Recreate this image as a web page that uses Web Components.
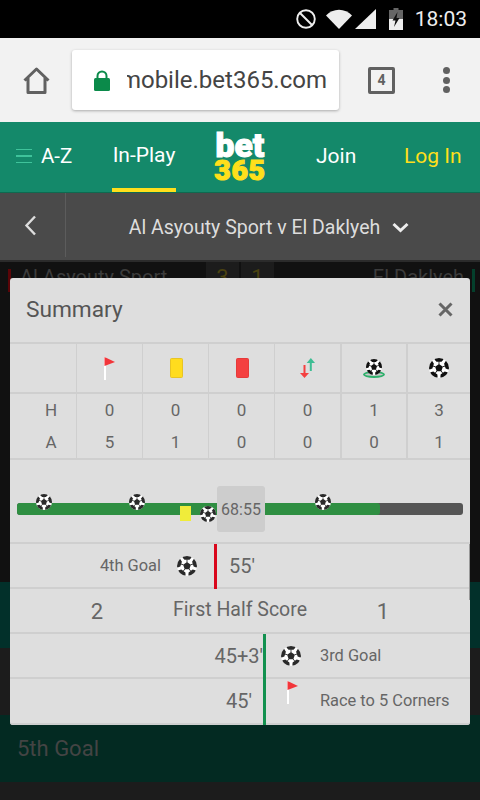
<!DOCTYPE html>
<html>
<head>
<meta charset="utf-8">
<title>Summary</title>
<style>
  html, body { margin: 0; padding: 0; background: #111; }
  body { width: 480px; height: 800px; overflow: hidden; position: relative; font-family: Roboto, "Liberation Sans", sans-serif; }
</style>
</head>
<body>
<status-bar></status-bar>
<browser-bar></browser-bar>
<site-header></site-header>
<match-bar></match-bar>
<match-behind></match-behind>
<summary-modal></summary-modal>

<script>
/* Ball icon, used in the table, the timeline and the event rows */
class SoccerBall extends HTMLElement {
    connectedCallback() {
        const size = this.getAttribute('size') || 20;
        const ink = this.getAttribute('ink') || '#222';
        let patches = '';
        for (let k = 0; k < 5; k++) {
            patches += `<g transform="rotate(${k * 72} 12 12)">
                <path d="M6.800 -1h10.400v3L15 4.600H9L6.800 2z" fill="${ink}"/>
                <path d="M12 4v3.500" stroke="${ink}" stroke-width="1" />
            </g>`;
        }
        this.shadowRoot || this.attachShadow({ mode: 'open' });
        this.shadowRoot.innerHTML = `
            <style>
                :host { display: inline-flex; width: ${size}px; height: ${size}px; }
                svg { width: 100%; height: 100%; display: block; }
            </style>
            <svg viewBox="0 0 24 24">
                <defs><clipPath id="c"><circle cx="12" cy="12" r="12"/></clipPath></defs>
                <circle cx="12" cy="12" r="12" fill="#fff"/>
                <g clip-path="url(#c)">${patches}</g>
                <path d="M12 7.200l4.600 3.300-1.800 5.500H9.200l-1.800-5.500z" fill="${ink}"/>
            </svg>`;
    }
}
customElements.define('soccer-ball', SoccerBall);

class CornerFlag extends HTMLElement {
    connectedCallback() {
        this.attachShadow({ mode: 'open' }).innerHTML = `
            <style>
                :host { display: inline-flex; width: 11px; height: 23px; }
                svg { width: 100%; height: 100%; display: block; }
            </style>
            <svg viewBox="0 0 11 23">
                <rect x="0" y="0" width="2" height="23" fill="#fff"/>
                <path d="M0.500 0L11 5 0.500 9z" fill="#f2353a"/>
            </svg>`;
    }
}
customElements.define('corner-flag', CornerFlag);

class StatusBar extends HTMLElement {
    connectedCallback() {
        this.attachShadow({ mode: 'open' }).innerHTML = `
            <style>
                :host { display: flex; height: 38px; background: #000; align-items: center; justify-content: flex-end; padding-right: 13px; box-sizing: border-box; }
                svg { display: block; }
                .time { color: #eee; font: 400 21px Roboto, sans-serif; margin-left: 12px; }
            </style>
            <svg width="20" height="20" viewBox="0 0 20 20" style="margin-right:10px">
                <circle cx="10" cy="10" r="8.800" fill="none" stroke="#eee" stroke-width="1.900"/>
                <path d="M4 4l12 12" stroke="#eee" stroke-width="1.900"/>
            </svg>
            <svg width="26" height="20" viewBox="0 0 26 20" style="margin-right:3px">
                <path d="M0 6.500C3.500 3 8 0.800 13 0.800S22.500 3 26 6.500L13 20z" fill="#eee"/>
            </svg>
            <svg width="21" height="20" viewBox="0 0 21 20">
                <path d="M0 20L21 0v20z" fill="#eee"/>
            </svg>
            <svg width="14" height="22" viewBox="0 0 14 22" style="margin-left:13px">
                <path d="M4.500 0h5v2H14v20H0V2h4.500z" fill="#666"/>
                <path d="M0 11h14v11H0z" fill="#eee"/>
                <path d="M8.500 4L3.500 12.500h3L5 19l5.500-9h-3z" fill="#111"/>
            </svg>
            <span class="time">18:03</span>`;
    }
}
customElements.define('status-bar', StatusBar);

class BrowserBar extends HTMLElement {
    connectedCallback() {
        this.attachShadow({ mode: 'open' }).innerHTML = `
            <style>
                :host { display: flex; height: 84px; background: #f2f2f2; align-items: center; box-sizing: border-box; padding-left: 23px; }
                svg { display: block; }
                .url { width: 267px; height: 60px; margin-left: 22px; background: #fff; border-radius: 3px; box-shadow: 0 1px 3px rgba(0,0,0,.3); display: flex; align-items: center; box-sizing: border-box; padding-left: 22px; }
                .clip { width: 200px; margin-left: 17px; overflow: hidden; white-space: nowrap; direction: rtl; font: 400 24px Roboto, sans-serif; color: #444; }
                .clip span { direction: ltr; unicode-bidi: embed; }
                .tabs { width: 27px; height: 27px; margin-left: 29px; border: 3px solid #616161; border-radius: 2px; box-sizing: border-box; display: flex; align-items: center; justify-content: center; font: 700 14px Roboto, sans-serif; color: #616161; }
                .dots { margin-left: 48px; display: flex; flex-direction: column; gap: 2.500px; }
                .dots i { width: 7px; height: 7px; border-radius: 50%; background: #616161; display: block; }
            </style>
            <svg width="27" height="27" viewBox="0 0 27 27">
                <path d="M1.500 13.500L13.500 2l12 11.500M5 11v14.500h17V11" fill="none" stroke="#616161" stroke-width="3" stroke-linejoin="round"/>
            </svg>
            <div class="url">
                <svg width="16" height="21" viewBox="0 0 16 21">
                    <path d="M3.500 9V6a4.500 4.500 0 0 1 9 0v3" fill="none" stroke="#0b8a4a" stroke-width="2"/>
                    <rect x="0" y="8" width="16" height="13" rx="1.500" fill="#0b8a4a"/>
                </svg>
                <div class="clip"><span>mobile.bet365.com</span></div>
            </div>
            <div class="tabs">4</div>
            <div class="dots"><i></i><i></i><i></i></div>`;
    }
}
customElements.define('browser-bar', BrowserBar);

class SiteHeader extends HTMLElement {
    connectedCallback() {
        this.attachShadow({ mode: 'open' }).innerHTML = `
            <style>
                :host { display: block; height: 71px; background: #14896a; border-bottom: 1px solid #0e6a50; box-sizing: border-box; font: 400 21px Roboto, sans-serif; color: #fff; }
                nav { display: grid; grid-template-columns: 112px 64px 1fr 88px 76px; height: 100%; }
                .item { display: flex; align-items: center; height: 68px; }
                .az { padding-left: 16px; gap: 9px; font-size: 20.500px; }
                .burger { width: 16px; display: flex; flex-direction: column; gap: 5px; }
                .burger i { display: block; height: 1.500px; background: #3fc39b; }
                .active { border-bottom: 4px solid #ffdf1b; height: 66px; justify-content: center; box-sizing: content-box; }
                .logo { display: flex; flex-direction: column; align-items: center; justify-content: flex-start; line-height: 1; padding-top: 12px; margin-right: 12px; }
                .logo b { font-family: Roboto, sans-serif; font-weight: 900; display: block; -webkit-text-stroke: 1.100px currentColor; }
                .bet { font-size: 33.500px; height: 25px; line-height: 23px; letter-spacing: .1px; color: #fff; }
                .n365 { font-size: 28.500px; height: 21px; line-height: 23px; color: #ffdf1b; letter-spacing: .6px; }
                .login { color: #ffdf1b; }
            </style>
            <nav>
                <div class="item az"><div class="burger"><i></i><i></i><i></i></div><span>A-Z</span></div>
                <div class="item active">In-Play</div>
                <div class="logo"><b class="bet">bet</b><b class="n365">365</b></div>
                <div class="item join">Join</div>
                <div class="item login">Log In</div>
            </nav>`;
    }
}
customElements.define('site-header', SiteHeader);

class MatchBar extends HTMLElement {
    connectedCallback() {
        this.attachShadow({ mode: 'open' }).innerHTML = `
            <style>
                :host { display: flex; height: 69px; background: #4a4a4a; border-bottom: 2px solid #2b2b2b; box-sizing: border-box; color: #ddd; font: 400 19.500px Roboto, sans-serif; }
                .back { width: 61px; height: 64px; padding-right: 4px; border-right: 1px solid #5c5c5c; display: flex; align-items: center; justify-content: center; }
                .title { flex: 1; display: flex; align-items: center; justify-content: center; gap: 12px; height: 64px; padding: 2px 8px 0 0; }
                svg { display: block; }
            </style>
            <div class="back">
                <svg width="13" height="21" viewBox="0 0 13 21"><path d="M11 1.500L2.500 10.500l8.500 9" fill="none" stroke="#ddd" stroke-width="2.400"/></svg>
            </div>
            <div class="title">
                <span>Al Asyouty Sport v El Daklyeh</span>
                <svg width="17" height="11" viewBox="0 0 17 11"><path d="M1.500 2l7 6.500 7-6.500" fill="none" stroke="#eee" stroke-width="3"/></svg>
            </div>`;
    }
}
customElements.define('match-bar', MatchBar);

/* The dimmed page under the popup */
class MatchBehind extends HTMLElement {
    connectedCallback() {
        this.attachShadow({ mode: 'open' }).innerHTML = `
            <style>
                :host { display: block; font: 400 20px Roboto, sans-serif; color: #3c3c3c; background: #111; }
                .score { height: 320px; box-sizing: border-box; }
                .head { display: flex; height: 30px; align-items: center; }
                .mark { width: 3px; height: 23px; background: #5a0508; margin: 7px 9px 0 8px; }
                .mark.away { background: #04402c; margin: 7px 5px 0 8px; }
                .home { width: 186px; }
                .num { width: 33px; height: 30px; background: #1c1c1c; color: #4a4210; font-size: 22px; text-align: center; line-height: 32px; margin-right: 2px; }
                .away-name { flex: 1; text-align: right; }
                .band { height: 66px; background: #02302a; }
                .plain { height: 67px; background: #1c1c1c; }
                .goal { height: 67px; background: #032a22; display: flex; align-items: center; padding-left: 17px; font-size: 22px; color: #444; }
                .end { height: 18px; background: #1c1c1c; }
            </style>
            <div class="score">
                <div class="head">
                    <div class="mark"></div>
                    <div class="home">Al Asyouty Sport</div>
                    <div class="num">3</div><div class="num">1</div>
                    <div class="away-name">El Daklyeh</div>
                    <div class="mark away"></div>
                </div>
            </div>
            <div class="band"></div>
            <div class="plain"></div>
            <div class="goal">5th Goal</div>
            <div class="end"></div>`;
    }
}
customElements.define('match-behind', MatchBehind);

class StatsTable extends HTMLElement {
    connectedCallback() {
        const rows = [['H', 0, 0, 0, 0, 1, 3], ['A', 5, 1, 0, 0, 0, 1]];
        const card = c => `<div style="width:13px;height:20px;margin-left:2px;box-sizing:border-box;border-radius:1.500px;background:${c[0]};border:1px solid ${c[1]}"></div>`;
        const icons = [
            '',
            '<corner-flag></corner-flag>',
            card(['#ffdc1e', '#e8c424']),
            card(['#f44040', '#e63a3a']),
            `<svg width="15" height="20" viewBox="0 0 15 20"><path d="M6.700 5L10.850 0 15 5z" fill="#3dbd93"/><rect x="9.800" y="4" width="2" height="9" fill="#3dbd93"/><path d="M0 15h9L4.500 20z" fill="#f44040"/><rect x="3.500" y="7" width="2" height="9" fill="#f44040"/></svg>`,
            `<div class="pitch"><i></i><soccer-ball size="16" ink="#111"></soccer-ball></div>`,
            `<soccer-ball size="20" ink="#111"></soccer-ball>`
        ];
        this.attachShadow({ mode: 'open' }).innerHTML = `
            <style>
                :host { display: block; font: 400 17px Roboto, sans-serif; color: #666; }
                .row { display: grid; grid-template-columns: repeat(6, 66px) 1fr; }
                .icons { height: 48px; border-bottom: 2px solid #cfcfcf; }
                .vals { height: 32px; }
                .cell { display: flex; align-items: center; justify-content: center; border-left: 1px solid #cfcfcf; box-sizing: border-box; }
                .cell:first-child { border-left: 0; padding-left: 16px; }
                .cell:nth-child(6), .cell:nth-child(7) { border-left-width: 2px; }
                .pitch { position: relative; width: 22px; height: 24px; display: flex; justify-content: center; padding-top: 3px; box-sizing: border-box; }
                .pitch i { position: absolute; left: 0; top: 15px; width: 22px; height: 7px; border-radius: 50%; border: 2.500px solid #2fb06c; background: #c8c8c8; box-sizing: border-box; }
                .pitch soccer-ball { position: relative; }
            </style>
            <div class="row icons">${icons.map(i => `<div class="cell">${i}</div>`).join('')}</div>
            ${rows.map(r => `<div class="row vals">${r.map(v => `<div class="cell">${v}</div>`).join('')}</div>`).join('')}`;
    }
}
customElements.define('stats-table', StatsTable);

class MatchTimeline extends HTMLElement {
    connectedCallback() {
        this.attachShadow({ mode: 'open' }).innerHTML = `
            <style>
                :host { display: block; height: 82px; position: relative; }
                .track { position: absolute; left: 7px; top: 43px; width: 446px; height: 12px; border-radius: 3px; overflow: hidden; background: #555; }
                .fill { width: 363px; height: 100%; background: #2f8f42; border-radius: 0 3px 3px 0; }
                .clock { position: absolute; left: 207px; top: 26px; width: 48px; height: 46px; background: #cdcdcd; border-radius: 3px; font: 400 16px Roboto, sans-serif; color: #666; display: flex; align-items: center; justify-content: center; }
                soccer-ball { position: absolute; }
                .yellow { position: absolute; left: 170px; top: 46px; width: 11px; height: 15px; background: #f0ec3a; }
            </style>
            <div class="track"><div class="fill"></div></div>
            <soccer-ball size="16" ink="#2a2a2a" style="left:26px;top:34px"></soccer-ball>
            <soccer-ball size="16" ink="#2a2a2a" style="left:119px;top:34px"></soccer-ball>
            <soccer-ball size="16" ink="#2a2a2a" style="left:305px;top:34px"></soccer-ball>
            <div class="yellow"></div>
            <soccer-ball size="16" ink="#2a2a2a" style="left:190px;top:46px"></soccer-ball>
            <div class="clock">68:55</div>`;
    }
}
customElements.define('match-timeline', MatchTimeline);

/* One line of the event list: side="home" puts the label left of the rule, side="away" right of it */
class EventRow extends HTMLElement {
    connectedCallback() {
        const side = this.getAttribute('side');
        const time = this.getAttribute('time');
        const label = this.getAttribute('label');
        const colour = side === 'home' ? '#d9071c' : '#12914f';
        const flag = this.getAttribute('icon') === 'flag';
        const icon = flag
            ? '<corner-flag></corner-flag>'
            : '<soccer-ball size="20" ink="#2a2a2a"></soccer-ball>';
        const inner = side === 'home' ? `
            <div class="left home">
                <span class="label">${label}</span><span class="ico">${icon}</span>
            </div>
            <div class="rule"></div>
            <div class="right"><span class="time" style="margin-left:12px">${time}</span></div>` : `
            <div class="left"><span class="time" style="margin-right:${this.getAttribute('pad') || 0}px">${time}</span></div>
            <div class="rule"></div>
            <div class="right">
                <span class="ico away ${flag ? 'up' : ''}">${icon}</span><span class="label ${flag ? 'down' : ''}">${label}</span>
            </div>`;
        this.attachShadow({ mode: 'open' }).innerHTML = `
            <style>
                :host { display: block; height: ${this.getAttribute('h') || 45}px; border-bottom: 2px solid #cfcfcf; box-sizing: border-box; }
                .wrap { display: grid; grid-template-columns: ${side === 'home' ? 204 : 253}px 3px 1fr; height: calc(100% + 2px); }
                .left, .right { display: flex; align-items: center; height: calc(100% - 2px); }
                .left { justify-content: flex-end; }
                .label { font: 400 16.400px Roboto, sans-serif; color: #666; white-space: nowrap; }
                .time { font: 400 20px Roboto, sans-serif; color: #666; }
                .rule { background: ${colour}; }
                .ico { display: inline-flex; }
                .home .ico { margin: 0 17px 0 16px; }
                .away { width: 58px; justify-content: center; margin-left: -4px; }
                .up { align-self: flex-start; padding-top: 2px; margin-left: -2px; width: 56px; }
                .down { position: relative; top: -1px; }
            </style>
            <div class="wrap">${inner}</div>`;
    }
}
customElements.define('event-row', EventRow);

class ScoreRow extends HTMLElement {
    connectedCallback() {
        this.attachShadow({ mode: 'open' }).innerHTML = `
            <style>
                :host { display: grid; grid-template-columns: 174px 112px 174px; height: 45px; border-bottom: 2px solid #cfcfcf; box-sizing: border-box; align-items: center; text-align: center; color: #666; font: 400 19.500px Roboto, sans-serif; }
                .n { font-size: 22px; padding-top: 2px; }
                .t { padding-bottom: 3px; white-space: nowrap; justify-self: center; }
            </style>
            <div class="n">${this.getAttribute('home')}</div>
            <div class="t"><slot></slot></div>
            <div class="n">${this.getAttribute('away')}</div>`;
    }
}
customElements.define('score-row', ScoreRow);

class SummaryModal extends HTMLElement {
    connectedCallback() {
        this.attachShadow({ mode: 'open' }).innerHTML = `
            <style>
                :host { display: block; position: absolute; left: 10px; top: 278px; width: 460px; height: 447px; background: #dedede; border-radius: 3px; overflow: hidden; color: #666; }
                header { height: 66px; border-bottom: 2px solid #cfcfcf; box-sizing: border-box; display: flex; align-items: center; justify-content: space-between; padding: 0 17px 2px 16px; }
                h2 { margin: 0; font: 400 22.700px Roboto, sans-serif; color: #555; }
                svg { display: block; }
                stats-table { border-bottom: 2px solid #cfcfcf; }
                match-timeline { border-bottom: 2px solid #cfcfcf; }
                .thumb { position: absolute; right: 0; top: 266px; width: 1.500px; height: 56px; background: #999; }
            </style>
            <header>
                <h2>Summary</h2>
                <svg width="15" height="15" viewBox="0 0 15 15"><path d="M1.500 1.500l12 12M13.500 1.500l-12 12" stroke="#666" stroke-width="3"/></svg>
            </header>
            <stats-table></stats-table>
            <match-timeline></match-timeline>
            <event-row side="home" time="55'" label="4th Goal"></event-row>
            <score-row home="2" away="1">First Half Score</score-row>
            <event-row side="away" time="45+3'" label="3rd Goal"></event-row>
            <event-row side="away" time="45'" label="Race to 5 Corners" icon="flag" pad="11" h="46"></event-row>
            <div class="thumb"></div>`;
    }
}
customElements.define('summary-modal', SummaryModal);
</script>
</body>
</html>
